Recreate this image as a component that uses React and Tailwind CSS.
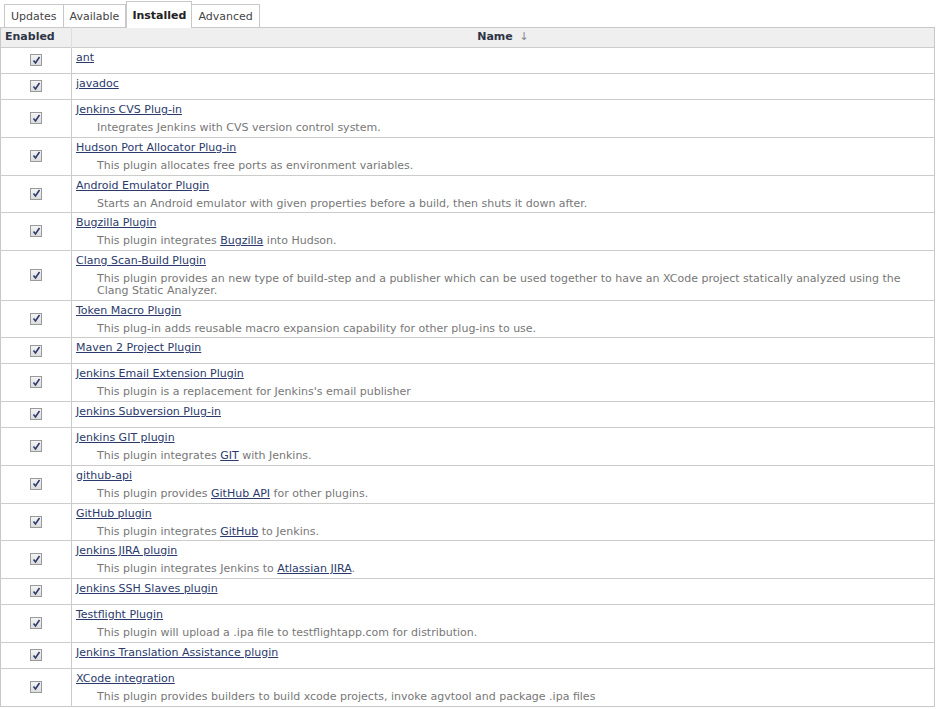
import React from "react";

const L = ({ children }) => (
  <a className="text-[#2b3a6b] underline">{children}</a>
);

const rows = [
  { name: "ant" },
  { name: "javadoc" },
  { name: "Jenkins CVS Plug-in", desc: "Integrates Jenkins with CVS version control system." },
  { name: "Hudson Port Allocator Plug-in", desc: "This plugin allocates free ports as environment variables." },
  { name: "Android Emulator Plugin", desc: "Starts an Android emulator with given properties before a build, then shuts it down after." },
  { name: "Bugzilla Plugin", desc: <>This plugin integrates <L>Bugzilla</L> into Hudson.</> },
  { name: "Clang Scan-Build Plugin", desc: "This plugin provides an new type of build-step and a publisher which can be used together to have an XCode project statically analyzed using the Clang Static Analyzer." },
  { name: "Token Macro Plugin", desc: "This plug-in adds reusable macro expansion capability for other plug-ins to use." },
  { name: "Maven 2 Project Plugin" },
  { name: "Jenkins Email Extension Plugin", desc: "This plugin is a replacement for Jenkins's email publisher" },
  { name: "Jenkins Subversion Plug-in" },
  { name: "Jenkins GIT plugin", desc: <>This plugin integrates <L>GIT</L> with Jenkins.</> },
  { name: "github-api", desc: <>This plugin provides <L>GitHub API</L> for other plugins.</> },
  { name: "GitHub plugin", desc: <>This plugin integrates <L>GitHub</L> to Jenkins.</> },
  { name: "Jenkins JIRA plugin", desc: <>This plugin integrates Jenkins to <L>Atlassian JIRA</L>.</> },
  { name: "Jenkins SSH Slaves plugin" },
  { name: "Testflight Plugin", desc: "This plugin will upload a .ipa file to testflightapp.com for distribution." },
  { name: "Jenkins Translation Assistance plugin" },
  { name: "XCode integration", desc: "This plugin provides builders to build xcode projects, invoke agvtool and package .ipa files" },
];

const Check = () => (
  <span className="inline-flex w-[12px] h-[12px] border border-[#9a9a9a] bg-gradient-to-b from-[#f4f4f4] to-[#dcdcdc] items-center justify-center align-middle">
    <svg width="9" height="9" viewBox="0 0 9 9">
      <path d="M1.5 4.5 L3.5 7 L7.5 1" fill="none" stroke="#2b3a6b" strokeWidth="1.6" />
    </svg>
  </span>
);

const Tab = ({ label, active }) =>
  active ? (
    <div className="h-[27px] px-[5px] pt-[6px] border border-b-0 border-[#c8c8c8] bg-white font-bold text-[#222] text-[11px] -mb-px relative z-10">
      {label}
    </div>
  ) : (
    <div className="h-[23px] mt-[4px] px-[6px] pt-[4px] border border-b-0 border-[#c8c8c8] bg-white text-[#444] text-[11px] -ml-px first:ml-0">
      {label}
    </div>
  );

export default function App() {
  return (
    <div
      className="w-[938px] h-[709px] bg-white overflow-hidden text-[11px] text-[#333]"
      style={{ fontFamily: '"DejaVu Sans", Verdana, sans-serif' }}
    >
      <div className="flex items-end pl-[4px] h-[27px]">
        <Tab label="Updates" />
        <Tab label="Available" />
        <Tab label="Installed" active />
        <Tab label="Advanced" />
      </div>
      <table className="w-[935px] border-collapse border border-[#c8c8c8]">
        <thead>
          <tr className="h-[20px] bg-[#efefef]">
            <th className="w-[71px] text-left pl-[4px] font-bold text-[#2e3446] border-r border-[#dedede]">Enabled</th>
            <th className="text-center font-bold text-[#2e3446]">
              Name <span className="font-normal text-[#888] ml-[3px]">↓</span>
            </th>
          </tr>
        </thead>
        <tbody>
          {rows.map((r, i) => (
            <tr key={i} className="border-t border-[#cccccc]">
              <td className="w-[71px] text-center align-middle border-r border-[#cccccc]">
                <Check />
              </td>
              <td className="align-top pl-[4px] pt-[3px] pb-[1px]">
                <div className="leading-[13px]">
                  <L>{r.name}</L>
                </div>
                <div className="pl-[21px] pr-[20px] pt-[6px] pb-[2px] leading-[11.75px] text-[#777]">
                  {r.desc}
                </div>
              </td>
            </tr>
          ))}
        </tbody>
      </table>
    </div>
  );
}
